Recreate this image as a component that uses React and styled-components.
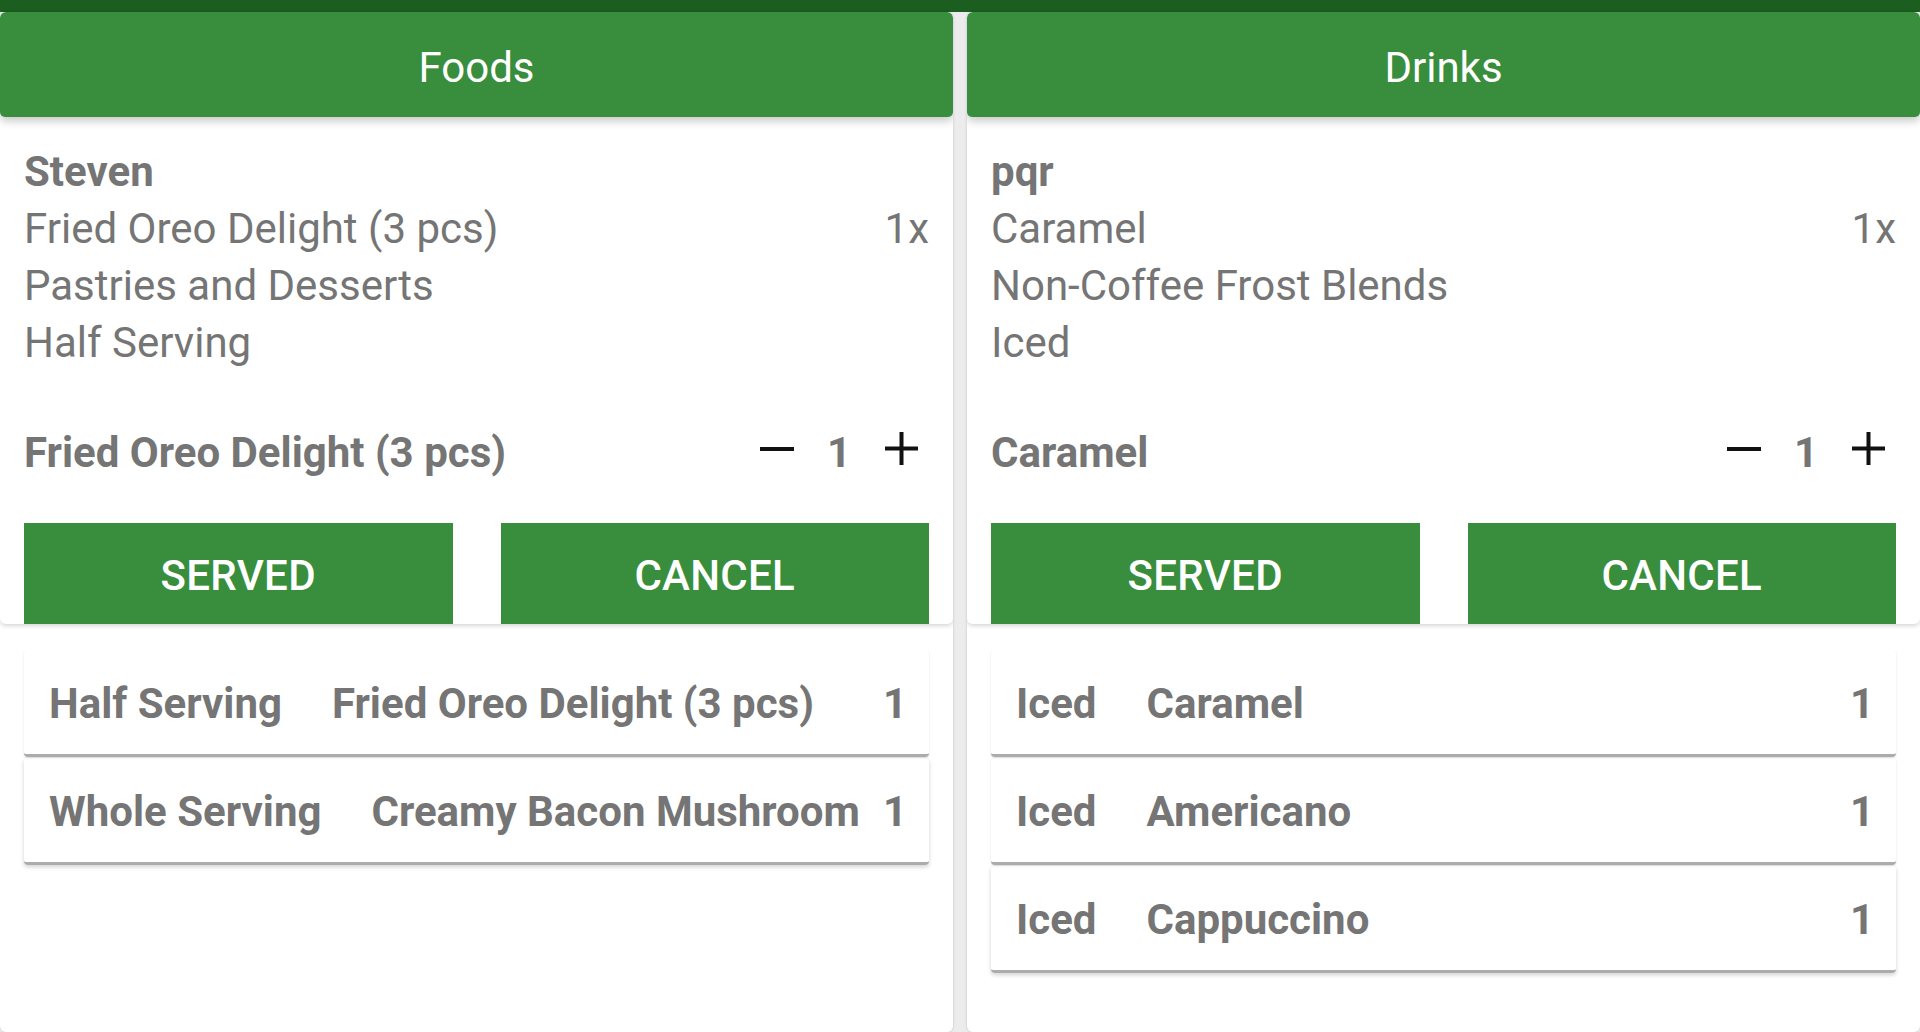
import React from 'react';
import styled, { createGlobalStyle } from 'styled-components';

const GlobalStyle = createGlobalStyle`
  html, body {
    margin: 0;
    padding: 0;
    height: 100%;
    overflow: hidden;
  }
  body {
    background: #ececec;
    font-family: Roboto, "Noto Sans", sans-serif;
  }
`;

const Page = styled.div`
  display: flex;
  flex-direction: column;
  height: 1032px;
`;

const TopBar = styled.div`
  height: 12px;
  background: #1b5e20;
  flex-shrink: 0;
`;

const Columns = styled.div`
  flex: 1;
  display: grid;
  grid-template-columns: 1fr 1fr;
  gap: 14px;
  min-height: 0;
`;

const Panel = styled.section`
  background: #fff;
  border-radius: 6px;
  box-shadow: 0 0 3px rgba(0, 0, 0, 0.18);
  display: flex;
  flex-direction: column;
  overflow: hidden;
`;

const Header = styled.header`
  position: relative;
  z-index: 2;
  height: 105px;
  box-sizing: border-box;
  padding-top: 5px;
  background: #388e3c;
  border-radius: 5px;
  box-shadow: 0 4px 10px rgba(0, 0, 0, 0.22);
  display: flex;
  align-items: center;
  justify-content: center;
  color: #fff;
  font-size: 42px;
`;

const Details = styled.div`
  position: relative;
  z-index: 1;
  background: #fff;
  border-radius: 0 0 6px 6px;
  box-shadow: 0 2px 4px rgba(0, 0, 0, 0.16);
  padding: 26px 24px 0;
  color: #757575;
  font-size: 42px;
`;

const Line = styled.div`
  display: flex;
  justify-content: space-between;
  line-height: 57px;
  font-weight: ${({ bold }) => (bold ? 700 : 400)};
`;

const ItemRow = styled.div`
  display: flex;
  align-items: center;
  justify-content: space-between;
  margin-top: 53px;
  line-height: 57px;
  font-weight: 700;
`;

const Stepper = styled.div`
  display: flex;
  align-items: center;
  margin-right: 11px;

  svg {
    margin-bottom: 8px;
  }
`;

const Count = styled.span`
  margin: 0 34px 0 33px;
  font-weight: 700;
  color: #757575;
`;

const Actions = styled.div`
  display: grid;
  grid-template-columns: 1fr 1fr;
  gap: 48px;
  margin-top: 42px;
`;

const ActionButton = styled.button`
  height: 101px;
  border: 0;
  padding: 4px 0 0;
  background: #388e3c;
  color: #fff;
  font-family: Roboto, sans-serif;
  font-size: 42px;
  font-weight: 500;
  letter-spacing: 0.3px;
`;

const OrderList = styled.div`
  display: flex;
  flex-direction: column;
  margin: 26px 24px 0;
`;

const OrderRow = styled.div`
  height: 102px;
  display: flex;
  align-items: center;
  padding: 2px 22px 0 25px;
  box-sizing: content-box;
  border-radius: 4px;
  border-bottom: 3px solid #acacac;
  box-shadow: 0 1px 2px rgba(0, 0, 0, 0.14);
  margin-bottom: 1px;
  color: #757575;
  font-size: 42px;
  font-weight: 700;
  white-space: nowrap;

  &:last-child {
    box-shadow: 0 2px 4px rgba(0, 0, 0, 0.18);
  }
`;

const Variant = styled.span`
  margin-right: 50px;
`;

const Name = styled.span`
  flex: 1;
`;

const Qty = styled.span`
  margin-left: 20px;
`;

function MinusIcon() {
  return (
    <svg width="34" height="34" viewBox="0 0 34 34">
      <path d="M0 17h34" stroke="#111" strokeWidth="4" />
    </svg>
  );
}

function PlusIcon() {
  return (
    <svg width="33" height="33" viewBox="0 0 33 33">
      <path d="M0 16.5h33M16.5 0v33" stroke="#111" strokeWidth="4" />
    </svg>
  );
}

const panels = [
  {
    title: 'Foods',
    customer: 'Steven',
    item: 'Fried Oreo Delight (3 pcs)',
    category: 'Pastries and Desserts',
    variant: 'Half Serving',
    orders: [
      { variant: 'Half Serving', name: 'Fried Oreo Delight (3 pcs)', qty: 1 },
      { variant: 'Whole Serving', name: 'Creamy Bacon Mushroom', qty: 1 }
    ]
  },
  {
    title: 'Drinks',
    customer: 'pqr',
    item: 'Caramel',
    category: 'Non-Coffee Frost Blends',
    variant: 'Iced',
    orders: [
      { variant: 'Iced', name: 'Caramel', qty: 1 },
      { variant: 'Iced', name: 'Americano', qty: 1 },
      { variant: 'Iced', name: 'Cappuccino', qty: 1 }
    ]
  }
];

function OrderPanel({ panel }) {
  return (
    <Panel>
      <Header>{panel.title}</Header>
      <Details>
        <Line bold>{panel.customer}</Line>
        <Line>
          <span>{panel.item}</span>
          <span>1x</span>
        </Line>
        <Line>{panel.category}</Line>
        <Line>{panel.variant}</Line>
        <ItemRow>
          <span>{panel.item}</span>
          <Stepper>
            <MinusIcon />
            <Count>1</Count>
            <PlusIcon />
          </Stepper>
        </ItemRow>
        <Actions>
          <ActionButton>SERVED</ActionButton>
          <ActionButton>CANCEL</ActionButton>
        </Actions>
      </Details>
      <OrderList>
        {panel.orders.map((order, i) => (
          <OrderRow key={i}>
            <Variant>{order.variant}</Variant>
            <Name>{order.name}</Name>
            <Qty>{order.qty}</Qty>
          </OrderRow>
        ))}
      </OrderList>
    </Panel>
  );
}

export default function App() {
  return (
    <Page>
      <GlobalStyle />
      <TopBar />
      <Columns>
        {panels.map((p) => (
          <OrderPanel key={p.title} panel={p} />
        ))}
      </Columns>
    </Page>
  );
}
